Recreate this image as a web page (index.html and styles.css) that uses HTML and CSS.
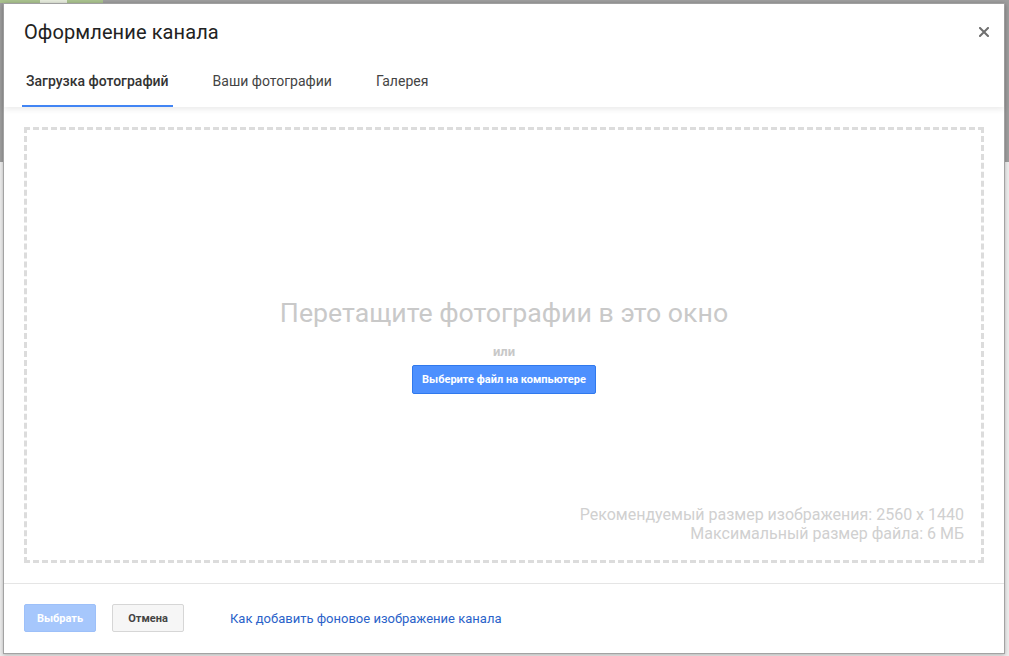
FILE: index.html
```html
<!DOCTYPE html>
<html lang="ru">
<head>
<meta charset="utf-8">
<title>Оформление канала</title>
<link rel="stylesheet" href="styles.css">
</head>
<body>
<div class="modal">
  <div class="modal-head">
    <div class="title-row">
      <h1 class="title">Оформление канала</h1>
      <button class="close" aria-label="Закрыть">
        <svg width="10" height="10" viewBox="0 0 10 10"><path d="M1 1L9 9M9 1L1 9" stroke="#6f6f6f" stroke-width="2" stroke-linecap="square"/></svg>
      </button>
    </div>
    <div class="tabs">
      <div class="tab active">Загрузка фотографий</div>
      <div class="tab">Ваши фотографии</div>
      <div class="tab">Галерея</div>
    </div>
  </div>
  <div class="modal-body">
    <div class="dropzone">
      <div class="drop-center">
        <div class="drop-title">Перетащите фотографии в это окно</div>
        <div class="drop-or">или</div>
        <button class="btn-pick">Выберите файл на компьютере</button>
      </div>
      <div class="drop-hint">
        <div>Рекомендуемый размер изображения: 2560 x 1440</div>
        <div>Максимальный размер файла: 6 МБ</div>
      </div>
    </div>
  </div>
  <div class="modal-foot">
    <button class="btn btn-primary">Выбрать</button>
    <button class="btn btn-default">Отмена</button>
    <a class="help-link" href="#">Как добавить фоновое изображение канала</a>
  </div>
</div>
</body>
</html>
```
FILE: styles.css
```css
html, body {
  margin: 0;
  padding: 0;
}
body {
  width: 1009px;
  height: 656px;
  overflow: hidden;
  box-sizing: border-box;
  padding: 3px 4px 2px 3px;
  font-family: Roboto, "Noto Sans", Arial, sans-serif;
  background:
    linear-gradient(to right, #a9c28e 0 40px, #e6ebdd 40px 67px, #a9c28e 67px 103px, transparent 103px) top left / 1009px 3px no-repeat,
    linear-gradient(to bottom, #9e9e9e 0 162px, #ededed 162px);
}
.modal {
  width: 1002px;
  height: 651px;
  box-sizing: border-box;
  background: #fff;
  border: 1px solid #a3a3a3;
  box-shadow: 0 1px 4px rgba(0,0,0,0.25);
  display: flex;
  flex-direction: column;
}
.modal-head {
  position: relative;
  z-index: 1;
  box-shadow: 0 2px 6px rgba(0,0,0,0.09);
}
.title-row {
  display: flex;
  align-items: center;
  justify-content: space-between;
  padding: 12px 15px 0 20px;
  height: 31px;
}
.title {
  margin: 0;
  font-size: 20px;
  font-weight: 400;
  line-height: 24px;
  color: #222;
  letter-spacing: 0.1px;
}
.close {
  border: 0;
  background: none;
  padding: 0;
  width: 10px;
  height: 10px;
  display: flex;
}
.tabs {
  display: flex;
  padding: 10px 0 0 18px;
  gap: 36px;
}
.tab {
  font-size: 14px;
  line-height: 20px;
  color: #444;
  padding: 14px 4px 14px;
  border-bottom: 2px solid transparent;
}
.tab.active {
  font-weight: 500;
  color: #333;
  border-bottom-color: #4285f4;
}
.modal-body {
  flex: 1;
  padding: 20px 20px 20px 20px;
  display: flex;
}
.dropzone {
  flex: 1;
  border: 3px dashed #dcdcdc;
  display: grid;
}
.drop-center, .drop-hint {
  grid-area: 1 / 1;
}
.drop-center {
  align-self: center;
  justify-self: center;
  display: flex;
  flex-direction: column;
  align-items: center;
}
.drop-title {
  font-size: 26.7px;
  line-height: 32px;
  color: #c9c9c9;
}
.drop-or {
  margin-top: 15px;
  font-size: 13px;
  line-height: 16px;
  font-weight: 700;
  color: #c8c8c8;
}
.btn-pick {
  margin-top: 5px;
  height: 29px;
  padding: 0 9px;
  border: 1px solid #3079ed;
  border-radius: 2px;
  background: #4d90fe;
  color: #fff;
  font-family: Roboto, Arial, sans-serif;
  font-size: 11px;
  font-weight: 700;
}
.drop-hint {
  align-self: end;
  justify-self: end;
  text-align: right;
  padding: 0 17px 17px 0;
  font-size: 16px;
  line-height: 19px;
  color: #d0d0d0;
}
.modal-foot {
  border-top: 1px solid #e5e5e5;
  padding: 20px 20px 21px 20px;
  display: flex;
  align-items: center;
}
.btn {
  height: 28px;
  width: 72px;
  box-sizing: border-box;
  border-radius: 2px;
  font-family: Roboto, Arial, sans-serif;
  font-size: 11px;
  font-weight: 700;
  padding: 0;
}
.btn-primary {
  background: #a6c7fc;
  border: 1px solid #9dc0f9;
  color: #fff;
}
.btn-default {
  margin-left: 16px;
  background: #f6f6f6;
  border: 1px solid #d6d6d6;
  color: #444;
}
.help-link {
  margin-left: 46px;
  font-size: 13px;
  color: #2a62c9;
  text-decoration: none;
}
```
